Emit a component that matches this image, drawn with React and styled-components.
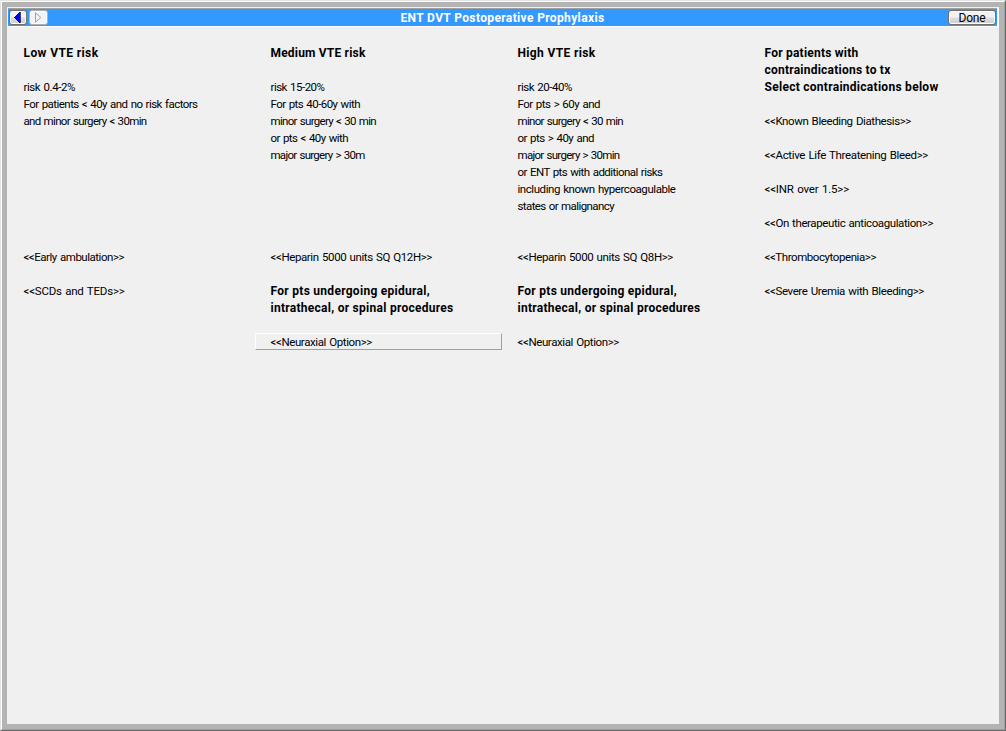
import React from "react";
import styled, { createGlobalStyle } from "styled-components";

const Global = createGlobalStyle`
  * { box-sizing: border-box; }
  body { margin: 0; overflow: hidden; }
`;

const OuterFrame = styled.div`
  width: 1006px;
  height: 731px;
  border: 1px solid;
  border-color: #e3e3e3 #696969 #696969 #e3e3e3;
  font: 12px/17px "Roboto", "Liberation Sans", sans-serif;
  color: #000;
`;

const InnerFrame = styled.div`
  height: 100%;
  border: 1px solid;
  border-color: #fff #a0a0a0 #a0a0a0 #fff;
  background: #b4b4b4;
  padding: 5px;
`;

const Panel = styled.main`
  height: 100%;
  background: #f0f0f0;
`;

const TitleBar = styled.header`
  display: flex;
  align-items: center;
  height: 20px;
  border: 1px solid;
  border-color: #f0f0f0 #fff #fff #f0f0f0;
  border-right-width: 2px;
  background: #3399ff;
  box-shadow: inset 0 1px #a0a0a0;
  padding: 1px 1px 0 1px;
`;

const Title = styled.h1`
  flex: 1;
  margin: 0;
  padding: 1px 0 0 7px;
  text-align: center;
  color: #fff;
  font-size: 12px;
  line-height: 17px;
  font-weight: 700;
  white-space: nowrap;
`;

const BarButton = styled.button`
  display: flex;
  align-items: center;
  justify-content: center;
  flex: none;
  width: ${(p) => p.$width}px;
  height: 15px;
  margin: 0 2px 0 0;
  padding: ${(p) => (p.$text ? "2px 0 0" : 0)};
  border: 1px solid ${(p) => (p.disabled ? "#adb2b5" : "#707070")};
  border-radius: 3px;
  background: ${(p) => (p.disabled ? "#f4f4f4" : "linear-gradient(#f2f2f2 0 48%, #dddddd 52%, #cfcfcf)")};
  box-shadow: inset 0 0 0 1px #fcfcfc;
  font: 12px/13px "Roboto", "Liberation Sans", sans-serif;
  color: #000;
  &:last-child { margin: 0; }
`;

const Columns = styled.div`
  display: grid;
  grid-template-columns: repeat(4, 247px);
  padding: 18px 0 0 1px;
`;

const Column = styled.section`
  display: flex;
  flex-direction: column;
`;

const Line = styled.div`
  height: 17px;
  padding-left: 15.5px;
  width: 247px;
  white-space: pre;
  font-size: ${(p) => (p.$bold ? 12 : 11.5)}px;
  font-weight: ${(p) => (p.$bold ? 700 : 400)};
  word-spacing: ${(p) => (p.$bold ? 0 : 0.8)}px;
  line-height: 17px;
`;

const RaisedLine = styled(Line)`
  margin: -1px 0 0;
  padding-left: 14.5px;
  border: 1px solid;
  border-color: #fff #a0a0a0 #a0a0a0 #fff;
`;

const Fit = styled.span`
  display: inline-block;
`;

/* Spreads the letters so that the label takes its nominal width. */
function Label({ text, width }) {
  const ref = React.useRef(null);
  const [spacing, setSpacing] = React.useState(0);
  React.useLayoutEffect(() => {
    const natural = ref.current.getBoundingClientRect().width;
    setSpacing((width - natural) / text.length);
  }, [text, width]);
  return (
    <Fit ref={ref} style={{ letterSpacing: `${spacing}px` }}>
      {text}
    </Fit>
  );
}

/* [row, text, width, kind] */
const columns = [
  [
    [0, "Low VTE risk", 75, "bold"],
    [2, "risk 0.4-2%", 51.5],
    [3, "For patients < 40y and no risk factors", 174],
    [4, "and minor surgery < 30min", 123],
    [12, "<<Early ambulation>>", 100.5],
    [14, "<<SCDs and TEDs>>", 101],
  ],
  [
    [0, "Medium VTE risk", 95, "bold"],
    [2, "risk 15-20%", 54],
    [3, "For pts 40-60y with", 89.5],
    [4, "minor surgery < 30 min", 105.5],
    [5, "or pts < 40y with", 77.5],
    [6, "major surgery > 30m", 94],
    [12, "<<Heparin 5000 units SQ Q12H>>", 161.5],
    [14, "For pts undergoing epidural,", 159.5, "bold"],
    [15, "intrathecal, or spinal procedures", 183, "bold"],
    [17, "<<Neuraxial Option>>", 101.5, "raised"],
  ],
  [
    [0, "High VTE risk", 78, "bold"],
    [2, "risk 20-40%", 54.5],
    [3, "For pts > 60y and", 82.5],
    [4, "minor surgery < 30 min", 105.5],
    [5, "or pts > 40y and", 76.5],
    [6, "major surgery > 30min", 102],
    [7, "or ENT pts with additional risks", 145],
    [8, "including known hypercoagulable", 158],
    [9, "states or malignancy", 96.5],
    [12, "<<Heparin 5000 units SQ Q8H>>", 155.5],
    [14, "For pts undergoing epidural,", 159.5, "bold"],
    [15, "intrathecal, or spinal procedures", 183, "bold"],
    [17, "<<Neuraxial Option>>", 101.5],
  ],
  [
    [0, "For patients with", 94, "bold"],
    [1, "contraindications to tx", 126, "bold"],
    [2, "Select contraindications below", 174, "bold"],
    [4, "<<Known Bleeding Diathesis>>", 146.5],
    [6, "<<Active Life Threatening Bleed>>", 163.5],
    [8, "<<INR over 1.5>>", 84.5],
    [10, "<<On therapeutic anticoagulation>>", 168.5],
    [12, "<<Thrombocytopenia>>", 111.5],
    [14, "<<Severe Uremia with Bleeding>>", 159.5],
  ],
];

const rows = Array.from({ length: 18 }, (_, i) => i);

export default function App() {
  return (
    <>
      <Global />
      <OuterFrame>
        <InnerFrame>
          <Panel>
            <TitleBar>
              <BarButton $width={18} aria-label="Back">
                <svg width="8" height="11" viewBox="0 0 8 11" shapeRendering="crispEdges">
                  <path d="M6 0V11L0 5.5Z" fill="#0000ff" />
                  <path d="M6.5 0V11" stroke="#404060" />
                </svg>
              </BarButton>
              <BarButton $width={19} aria-label="Forward" disabled>
                <svg width="7" height="11" viewBox="0 0 7 11">
                  <path d="M.5 .8V10.2L5.8 5.5Z" fill="none" stroke="#a0a0a0" />
                </svg>
              </BarButton>
              <Title>
                <Label text="ENT DVT Postoperative Prophylaxis" width={204} />
              </Title>
              <BarButton $width={48} $text>
                <Label text="Done" width={27} />
              </BarButton>
            </TitleBar>
            <Columns>
              {columns.map((lines, c) => (
                <Column key={c}>
                  {rows.map((r) => {
                    const line = lines.find((l) => l[0] === r);
                    const Row = line?.[3] === "raised" ? RaisedLine : Line;
                    return (
                      <Row key={r} $bold={line?.[3] === "bold"}>
                        {line && <Label text={line[1]} width={line[2]} />}
                      </Row>
                    );
                  })}
                </Column>
              ))}
            </Columns>
          </Panel>
        </InnerFrame>
      </OuterFrame>
    </>
  );
}
